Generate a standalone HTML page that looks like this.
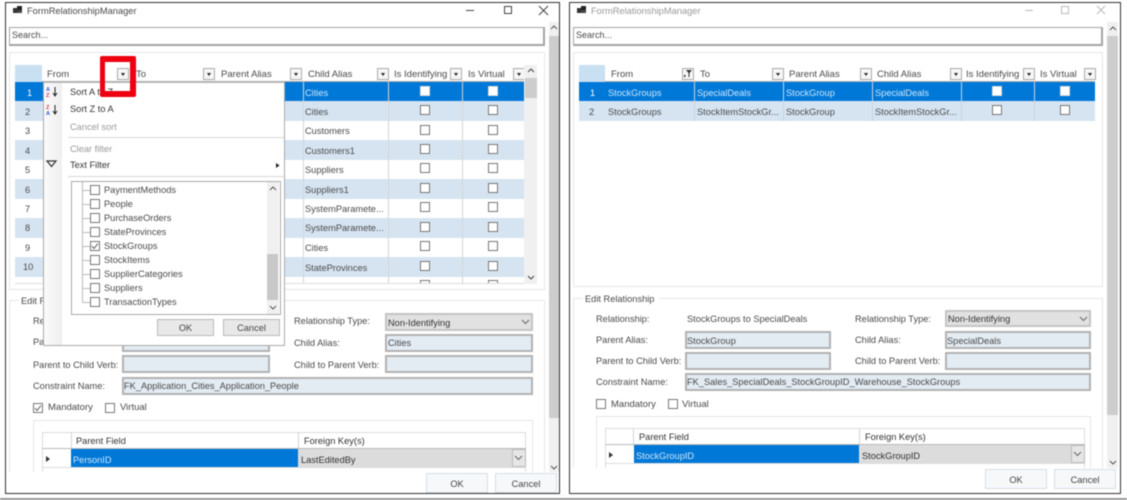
<!DOCTYPE html>
<html><head><meta charset="utf-8"><title>FormRelationshipManager</title>
<style>
html,body{margin:0;padding:0;background:#fff}
#p{position:relative;width:1127px;height:500px;overflow:hidden;background:#fff;font-family:"Liberation Sans",sans-serif;font-size:9.25px;color:#4a4a4a;filter:blur(.5px)}
#p div,#p span{position:absolute;box-sizing:border-box}
.t{white-space:nowrap;line-height:12px;height:12px;margin-top:1px}
.r{margin-top:0}
.h{margin-top:1px;font-size:9.5px}
.w{color:#cfe6fb}
.g{color:#999}
.box{background:#e3ebf3;border:2px solid #b2b2b2}
.combo{background:#e1e1e1;border:2px solid #c4c4c4}
.cb{width:10px;height:10px;border:1px solid #777;background:#fff}
.dd{width:12px;height:12px;border:1px solid #aaa;background:#f6f6f6}
.dd:after{content:"";position:absolute;left:3px;top:4px;border:2.5px solid transparent;border-top:3px solid #222}
.btn{background:#e8e8e8;border:1px solid #bbb;text-align:center;line-height:17px;color:#444}
.fb{background:#f6f8fa;border:1px solid #d5dde5;text-align:center;line-height:20px;color:#444}
.l{background:#d4d4d4}
.panel{border:1px solid #e6e6e6;background:#fff}
</style></head><body><div id="p">

<!-- LEFT WINDOW -->
<div style="left:5px;top:2px;width:555px;height:492px;border:1px solid #333;background:#fff"></div>
<svg style="position:absolute;left:12px;top:5px" width="12" height="10"><rect x="1" y="3" width="4" height="5" fill="#333"/><rect x="5" y="1" width="5" height="4" fill="#222"/><rect x="5" y="5" width="5" height="3" fill="#444"/></svg>
<span class="t" style="left:27px;top:4px;font-size:9.3px">FormRelationshipManager</span>
<svg style="position:absolute;left:460px;top:3px" width="95" height="14" fill="none" stroke="#444"><path d="M6 7.500H14M44.500 3.500H51.500V10.500H44.500ZM79 3L88 12M88 3L79 12"/></svg>
<div style="left:9px;top:27px;width:536px;height:19px;border:1px solid #a4a4a4;border-width:1px 2px 2px 1px"></div>
<span class="t" style="left:12px;top:28px;font-size:9px">Search...</span>
<div style="left:549px;top:22px;width:10px;height:450px;background:#f0f0f0"></div>
<div style="left:549px;top:36px;width:10px;height:382px;background:#cdcdcd"></div>
<svg style="position:absolute;left:549px;top:24px" width="10" height="8" fill="none" stroke="#555"><path d="M2 5L5 2L8 5"/></svg>
<svg style="position:absolute;left:549px;top:463px" width="10" height="8" fill="none" stroke="#555"><path d="M2 3L5 6L8 3"/></svg>

<div class="panel" style="left:9px;top:52px;width:536px;height:238px"></div>
<div style="left:15px;top:65px;width:522px;height:219px;background:#fff"></div>
<div style="left:15px;top:65px;width:27px;height:17px;background:#c9dff2"></div>
<span class="t h" style="left:47px;top:68px">From</span>
<div class="dd" style="left:117px;top:68px"></div>
<span class="t h" style="left:136px;top:68px">To</span>
<div class="dd" style="left:203px;top:68px"></div>
<span class="t h" style="left:221px;top:68px">Parent Alias</span>
<div class="dd" style="left:290px;top:68px"></div>
<span class="t h" style="left:308px;top:68px">Child Alias</span>
<div class="dd" style="left:377px;top:68px"></div>
<span class="t h" style="left:394px;top:68px">Is Identifying</span>
<div class="dd" style="left:450px;top:68px"></div>
<span class="t h" style="left:468px;top:68px">Is Virtual</span>
<div class="dd" style="left:513px;top:68px"></div>
<div style="left:42px;top:81px;width:482px;height:1px;background:#aaa"></div>

<div style="left:15px;top:82px;width:509px;height:19px;background:#0078d7"></div>
<div style="left:15px;top:101px;width:509px;height:20px;background:#d6e4f2"></div>
<div style="left:15px;top:140px;width:509px;height:20px;background:#d6e4f2"></div>
<div style="left:15px;top:179px;width:509px;height:20px;background:#d6e4f2"></div>
<div style="left:15px;top:218px;width:509px;height:20px;background:#d6e4f2"></div>
<div style="left:15px;top:257px;width:509px;height:20px;background:#d6e4f2"></div>
<div class="l" style="left:303px;top:82px;width:1px;height:201px"></div>
<div class="l" style="left:388px;top:82px;width:1px;height:201px"></div>
<div class="l" style="left:462px;top:82px;width:1px;height:201px"></div>
<div style="left:15px;top:283px;width:522px;height:1px;background:#ddd"></div>
<div style="left:524px;top:65px;width:13px;height:219px;background:#f0f0f0"></div>
<div style="left:525px;top:78px;width:12px;height:20px;background:#cdcdcd"></div>
<svg style="position:absolute;left:526px;top:67px" width="10" height="8" fill="none" stroke="#444"><path d="M2 5L5 2L8 5"/></svg>
<svg style="position:absolute;left:526px;top:273px" width="10" height="8" fill="none" stroke="#444"><path d="M2 3L5 6L8 3"/></svg>

<span class="t r" style="left:27px;top:87px;color:#fff">1</span>
<span class="t r" style="left:25px;top:106px">2</span>
<span class="t r" style="left:25px;top:125px">3</span>
<span class="t r" style="left:25px;top:145px">4</span>
<span class="t r" style="left:25px;top:164px">5</span>
<span class="t r" style="left:25px;top:184px">6</span>
<span class="t r" style="left:25px;top:203px">7</span>
<span class="t r" style="left:25px;top:222px">8</span>
<span class="t r" style="left:25px;top:242px">9</span>
<span class="t r" style="left:23px;top:261px">10</span>

<span class="t r w" style="left:305px;top:87px">Cities</span>
<span class="t r" style="left:305px;top:106px">Cities</span>
<span class="t r" style="left:305px;top:125px">Customers</span>
<span class="t r" style="left:305px;top:145px">Customers1</span>
<span class="t r" style="left:305px;top:164px">Suppliers</span>
<span class="t r" style="left:305px;top:184px">Suppliers1</span>
<span class="t r" style="left:305px;top:203px">SystemParamete...</span>
<span class="t r" style="left:305px;top:222px">SystemParamete...</span>
<span class="t r" style="left:305px;top:242px">Cities</span>
<span class="t r" style="left:305px;top:262px">StateProvinces</span>

<div class="cb" style="left:420px;top:86px;border-color:#ddd"></div><div class="cb" style="left:488px;top:86px;border-color:#ddd"></div>
<div class="cb" style="left:420px;top:105px"></div><div class="cb" style="left:488px;top:105px"></div>
<div class="cb" style="left:420px;top:125px"></div><div class="cb" style="left:488px;top:125px"></div>
<div class="cb" style="left:420px;top:144px"></div><div class="cb" style="left:488px;top:144px"></div>
<div class="cb" style="left:420px;top:163px"></div><div class="cb" style="left:488px;top:163px"></div>
<div class="cb" style="left:420px;top:183px"></div><div class="cb" style="left:488px;top:183px"></div>
<div class="cb" style="left:420px;top:202px"></div><div class="cb" style="left:488px;top:202px"></div>
<div class="cb" style="left:420px;top:222px"></div><div class="cb" style="left:488px;top:222px"></div>
<div class="cb" style="left:420px;top:241px"></div><div class="cb" style="left:488px;top:241px"></div>
<div class="cb" style="left:420px;top:261px"></div><div class="cb" style="left:488px;top:261px"></div>
<div style="left:420px;top:280px;width:10px;height:3px;border:1px solid #777;border-bottom:0"></div>
<div style="left:488px;top:280px;width:10px;height:3px;border:1px solid #777;border-bottom:0"></div>

<!-- left edit group -->
<div class="panel" style="left:9px;top:300px;width:536px;height:172px;border-bottom:0"></div>
<div style="left:19px;top:296px;width:40px;height:10px;background:#fff"></div>
<span class="t" style="left:21px;top:294px">Edit Relationship</span>
<span class="t" style="left:33px;top:314px">Relationship:</span>
<span class="t" style="left:33px;top:335px">Parent Alias:</span>
<span class="t" style="left:33px;top:358px">Parent to Child Verb:</span>
<span class="t" style="left:33px;top:379px">Constraint Name:</span>
<span class="t" style="left:294px;top:314px">Relationship Type:</span>
<span class="t" style="left:294px;top:336px">Child Alias:</span>
<span class="t" style="left:294px;top:358px">Child to Parent Verb:</span>
<div class="box" style="left:122px;top:334px;width:148px;height:18px"></div>
<div class="box" style="left:122px;top:355px;width:148px;height:18px"></div>
<div class="box" style="left:122px;top:377px;width:411px;height:18px"></div>
<span class="t r" style="left:124px;top:380px">FK_Application_Cities_Application_People</span>
<div class="combo" style="left:385px;top:313px;width:148px;height:18px"></div>
<span class="t" style="left:388px;top:316px;color:#333">Non-Identifying</span>
<svg style="position:absolute;left:521px;top:318px" width="10" height="8" fill="none" stroke="#666"><path d="M1 2L4.500 5.500L8 2"/></svg>
<div class="box" style="left:385px;top:334px;width:148px;height:18px"></div>
<span class="t r" style="left:388px;top:337px">Cities</span>
<div class="box" style="left:385px;top:355px;width:148px;height:18px"></div>
<div class="cb" style="left:33px;top:403px"></div>
<svg style="position:absolute;left:33px;top:403px" width="10" height="10" fill="none" stroke="#555"><path d="M2 5L4 7.500L8 2.500"/></svg>
<span class="t r" style="left:48px;top:402px;font-size:9.5px">Mandatory</span>
<div class="cb" style="left:105px;top:403px"></div>
<span class="t r" style="left:120px;top:402px;font-size:9.5px">Virtual</span>

<div class="panel" style="left:33px;top:420px;width:500px;height:52px;border-bottom:0"></div>
<div style="left:42px;top:432px;width:484px;height:40px;border-left:1px solid #ddd;border-top:1px solid #ddd;border-right:1px solid #ddd"></div>
<div class="l" style="left:71px;top:432px;width:1px;height:17px"></div>
<div class="l" style="left:298px;top:432px;width:1px;height:17px"></div>
<div style="left:42px;top:448px;width:484px;height:1px;background:#bbb"></div>
<span class="t" style="left:76px;top:434px;color:#333">Parent Field</span>
<span class="t" style="left:304px;top:434px;color:#333">Foreign Key(s)</span>
<svg style="position:absolute;left:45px;top:455px" width="6" height="8"><path d="M1 1L5 4L1 7Z" fill="#333"/></svg>
<div style="left:71px;top:449px;width:227px;height:18px;background:#0078d7"></div>
<span class="t w" style="left:73px;top:453px">PersonID</span>
<div style="left:298px;top:449px;width:228px;height:18px;background:#dcdcdc"></div>
<span class="t" style="left:301px;top:453px;color:#333">LastEditedBy</span>
<div style="left:512px;top:449px;width:14px;height:18px;background:#e6e6e6;border:1px solid #bbb"></div>
<svg style="position:absolute;left:514px;top:454px" width="10" height="8" fill="none" stroke="#666"><path d="M1 2L4.500 5.500L8 2"/></svg>
<div style="left:42px;top:467px;width:484px;height:1px;background:#ddd"></div>
<div style="left:6px;top:472px;width:542px;height:21px;background:#fff"></div>
<div class="fb" style="left:426px;top:473px;width:62px;height:20px">OK</div>
<div class="fb" style="left:495px;top:473px;width:62px;height:20px">Cancel</div>

<!-- left filter menu -->
<div style="left:43px;top:82px;width:242px;height:264px;background:#fff;border:1px solid #aaa;border-top:1px solid #bbb"></div>
<div style="left:44px;top:83px;width:18px;height:262px;background:linear-gradient(90deg,#fbfbfb,#efefef)"></div>
<svg style="position:absolute;left:46px;top:86px" width="14" height="12"><text x="0" y="5" font-size="5.500" font-family="Liberation Sans" fill="#3355dd" font-weight="bold">A</text><text x="0" y="11" font-size="5.500" font-family="Liberation Sans" fill="#dd3344" font-weight="bold">Z</text><path d="M9 1V9M7 7L9 10L11 7" stroke="#222" fill="none"/></svg>
<svg style="position:absolute;left:46px;top:104px" width="14" height="12"><text x="0" y="5" font-size="5.500" font-family="Liberation Sans" fill="#dd3344" font-weight="bold">Z</text><text x="0" y="11" font-size="5.500" font-family="Liberation Sans" fill="#3355dd" font-weight="bold">A</text><path d="M9 1V9M7 7L9 10L11 7" stroke="#222" fill="none"/></svg>
<svg style="position:absolute;left:46px;top:160px" width="12" height="8"><path d="M1 1H10L5.500 6.500Z" fill="none" stroke="#333" stroke-width="1.200"/></svg>
<span class="t" style="left:70px;top:85px;color:#333">Sort A to Z</span>
<span class="t r" style="left:70px;top:103px;color:#333">Sort Z to A</span>
<span class="t g" style="left:70px;top:120px">Cancel sort</span>
<div style="left:68px;top:137px;width:216px;height:1px;background:#d8d8d8"></div>
<span class="t g" style="left:70px;top:142px">Clear filter</span>
<span class="t" style="left:70px;top:158px;color:#333">Text Filter</span>
<svg style="position:absolute;left:275px;top:162px" width="6" height="7"><path d="M1 1L4.500 3.500L1 6Z" fill="#222"/></svg>
<div style="left:68px;top:176px;width:216px;height:1px;background:#d8d8d8"></div>
<div style="left:71px;top:181px;width:210px;height:134px;border:1px solid #aaa;background:#fff"></div>
<div style="left:82px;top:182px;width:1px;height:120px;background:#bbb"></div>
<div style="left:82px;top:190px;width:8px;height:1px;background:#bbb"></div>
<div style="left:82px;top:204px;width:8px;height:1px;background:#bbb"></div>
<div style="left:82px;top:218px;width:8px;height:1px;background:#bbb"></div>
<div style="left:82px;top:232px;width:8px;height:1px;background:#bbb"></div>
<div style="left:82px;top:246px;width:8px;height:1px;background:#bbb"></div>
<div style="left:82px;top:260px;width:8px;height:1px;background:#bbb"></div>
<div style="left:82px;top:274px;width:8px;height:1px;background:#bbb"></div>
<div style="left:82px;top:288px;width:8px;height:1px;background:#bbb"></div>
<div style="left:82px;top:302px;width:8px;height:1px;background:#bbb"></div>
<div class="cb" style="left:90px;top:185px"></div><span class="t r" style="left:104px;top:184px">PaymentMethods</span>
<div class="cb" style="left:90px;top:199px"></div><span class="t r" style="left:104px;top:198px">People</span>
<div class="cb" style="left:90px;top:213px"></div><span class="t r" style="left:104px;top:212px">PurchaseOrders</span>
<div class="cb" style="left:90px;top:227px"></div><span class="t r" style="left:104px;top:226px">StateProvinces</span>
<div class="cb" style="left:90px;top:241px"></div>
<svg style="position:absolute;left:90px;top:241px" width="10" height="10" fill="none" stroke="#555"><path d="M2 5L4 7.500L8 2.500"/></svg>
<span class="t r" style="left:104px;top:240px">StockGroups</span>
<div class="cb" style="left:90px;top:255px"></div><span class="t r" style="left:104px;top:254px">StockItems</span>
<div class="cb" style="left:90px;top:269px"></div><span class="t r" style="left:104px;top:268px">SupplierCategories</span>
<div class="cb" style="left:90px;top:283px"></div><span class="t r" style="left:104px;top:282px">Suppliers</span>
<div class="cb" style="left:90px;top:297px"></div><span class="t r" style="left:104px;top:296px">TransactionTypes</span>
<div style="left:267px;top:182px;width:12px;height:132px;background:#f0f0f0"></div>
<div style="left:267px;top:254px;width:11px;height:46px;background:#c8c8c8"></div>
<svg style="position:absolute;left:268px;top:185px" width="10" height="8" fill="none" stroke="#555"><path d="M2 5L5 2L8 5"/></svg>
<svg style="position:absolute;left:268px;top:303px" width="10" height="8" fill="none" stroke="#555"><path d="M2 3L5 6L8 3"/></svg>
<div class="btn" style="left:157px;top:319px;width:57px;height:17px">OK</div>
<div class="btn" style="left:223px;top:319px;width:57px;height:17px">Cancel</div>

<!-- red highlight -->
<div style="left:100px;top:56px;width:36px;height:41px;border:solid #ee0010;border-width:6px 6px 6px 5px;border-radius:2px"></div>

<!-- RIGHT WINDOW -->
<div style="left:569px;top:2px;width:552px;height:492px;border:1px solid #333;background:transparent"></div>
<svg style="position:absolute;left:576px;top:5px" width="12" height="10"><rect x="1" y="3" width="4" height="5" fill="#333"/><rect x="5" y="1" width="5" height="4" fill="#222"/><rect x="5" y="5" width="5" height="3" fill="#444"/></svg>
<span class="t" style="left:591px;top:4px;font-size:9.3px;color:#999">FormRelationshipManager</span>
<svg style="position:absolute;left:1020px;top:3px" width="95" height="14" fill="none" stroke="#bbb"><path d="M5 7.500H13M41.500 3.500H48.500V10.500H41.500ZM77 3L85 11M85 3L77 11"/></svg>
<div style="left:573px;top:27px;width:530px;height:19px;border:1px solid #a4a4a4;border-width:1px 2px 2px 1px"></div>
<span class="t" style="left:576px;top:28px;font-size:9px">Search...</span>
<div style="left:1107px;top:22px;width:11px;height:446px;background:#f0f0f0"></div>
<div style="left:1107px;top:36px;width:11px;height:379px;background:#cdcdcd"></div>
<svg style="position:absolute;left:1108px;top:25px" width="10" height="8" fill="none" stroke="#555"><path d="M2 5L5 2L8 5"/></svg>
<svg style="position:absolute;left:1108px;top:458px" width="10" height="8" fill="none" stroke="#555"><path d="M2 3L5 6L8 3"/></svg>

<div class="panel" style="left:573px;top:52px;width:530px;height:235px"></div>
<div style="left:579px;top:65px;width:26px;height:17px;background:#c9dff2"></div>
<span class="t h" style="left:611px;top:68px">From</span>
<div style="left:682px;top:68px;width:12px;height:12px;border:1px solid #aaa;background:#f6f6f6"></div>
<svg style="position:absolute;left:683px;top:69px" width="10" height="10"><path d="M3 1H9L6.500 4V8H5.500V4Z" fill="#333"/><rect x="1" y="6" width="1.500" height="2" fill="#333"/></svg>
<span class="t h" style="left:700px;top:68px">To</span>
<div class="dd" style="left:772px;top:68px"></div>
<span class="t h" style="left:789px;top:68px">Parent Alias</span>
<div class="dd" style="left:860px;top:68px"></div>
<span class="t h" style="left:877px;top:68px">Child Alias</span>
<div class="dd" style="left:950px;top:68px"></div>
<span class="t h" style="left:966px;top:68px">Is Identifying</span>
<div class="dd" style="left:1023px;top:68px"></div>
<span class="t h" style="left:1040px;top:68px">Is Virtual</span>
<div class="dd" style="left:1084px;top:68px"></div>
<div style="left:605px;top:81px;width:490px;height:1px;background:#aaa"></div>
<div style="left:579px;top:82px;width:516px;height:19px;background:#0078d7"></div>
<div style="left:579px;top:101px;width:516px;height:20px;background:#d6e4f2"></div>
<div style="left:694px;top:82px;width:1px;height:39px;background:#c4d4e4"></div>
<div style="left:783px;top:82px;width:1px;height:39px;background:#c4d4e4"></div>
<div style="left:872px;top:82px;width:1px;height:39px;background:#c4d4e4"></div>
<div style="left:961px;top:82px;width:1px;height:39px;background:#c4d4e4"></div>
<div style="left:1034px;top:82px;width:1px;height:39px;background:#c4d4e4"></div>
<span class="t r" style="left:590px;top:87px;color:#fff">1</span>
<span class="t r" style="left:589px;top:106px">2</span>
<span class="t r w" style="left:608px;top:87px">StockGroups</span>
<span class="t r w" style="left:697px;top:87px">SpecialDeals</span>
<span class="t r w" style="left:786px;top:87px">StockGroup</span>
<span class="t r w" style="left:875px;top:87px">SpecialDeals</span>
<span class="t r" style="left:608px;top:106px">StockGroups</span>
<span class="t r" style="left:697px;top:106px">StockItemStockGr...</span>
<span class="t r" style="left:786px;top:106px">StockGroup</span>
<span class="t r" style="left:875px;top:106px">StockItemStockGr...</span>
<div class="cb" style="left:992px;top:86px;border-color:#ddd"></div><div class="cb" style="left:1060px;top:86px;border-color:#ddd"></div>
<div class="cb" style="left:992px;top:105px"></div><div class="cb" style="left:1060px;top:105px"></div>

<div class="panel" style="left:573px;top:298px;width:530px;height:170px;border-bottom:0"></div>
<div style="left:583px;top:294px;width:76px;height:10px;background:#fff"></div>
<span class="t" style="left:585px;top:292px">Edit Relationship</span>
<span class="t" style="left:596px;top:312px">Relationship:</span>
<span class="t" style="left:687px;top:312px">StockGroups to SpecialDeals</span>
<span class="t" style="left:596px;top:333px">Parent Alias:</span>
<span class="t r" style="left:596px;top:355px">Parent to Child Verb:</span>
<span class="t r" style="left:596px;top:376px">Constraint Name:</span>
<span class="t" style="left:855px;top:312px">Relationship Type:</span>
<span class="t" style="left:855px;top:333px">Child Alias:</span>
<span class="t r" style="left:855px;top:355px">Child to Parent Verb:</span>
<div class="box" style="left:685px;top:331px;width:146px;height:18px"></div>
<span class="t" style="left:687px;top:334px">StockGroup</span>
<div class="box" style="left:685px;top:352px;width:146px;height:18px"></div>
<div class="box" style="left:685px;top:373px;width:406px;height:18px"></div>
<span class="t r" style="left:687px;top:376px">FK_Sales_SpecialDeals_StockGroupID_Warehouse_StockGroups</span>
<div class="combo" style="left:945px;top:310px;width:146px;height:17px"></div>
<span class="t r" style="left:948px;top:313px;color:#333">Non-Identifying</span>
<svg style="position:absolute;left:1079px;top:315px" width="10" height="8" fill="none" stroke="#666"><path d="M1 2L4.500 5.500L8 2"/></svg>
<div class="box" style="left:945px;top:331px;width:146px;height:18px"></div>
<span class="t" style="left:947px;top:334px">SpecialDeals</span>
<div class="box" style="left:945px;top:352px;width:146px;height:18px"></div>
<div class="cb" style="left:596px;top:399px"></div>
<span class="t" style="left:611px;top:398px;font-size:9.5px">Mandatory</span>
<div class="cb" style="left:668px;top:399px"></div>
<span class="t" style="left:682px;top:398px;font-size:9.5px">Virtual</span>

<div class="panel" style="left:596px;top:416px;width:495px;height:52px;border-bottom:0"></div>
<div style="left:605px;top:428px;width:480px;height:40px;border:1px solid #ddd;border-bottom:0"></div>
<div class="l" style="left:633px;top:428px;width:1px;height:17px"></div>
<div class="l" style="left:859px;top:428px;width:1px;height:17px"></div>
<div style="left:605px;top:444px;width:480px;height:1px;background:#bbb"></div>
<span class="t" style="left:639px;top:430px;color:#333">Parent Field</span>
<span class="t" style="left:865px;top:430px;color:#333">Foreign Key(s)</span>
<svg style="position:absolute;left:608px;top:451px" width="6" height="8"><path d="M1 1L5 4L1 7Z" fill="#333"/></svg>
<div style="left:634px;top:445px;width:225px;height:18px;background:#0078d7"></div>
<span class="t w" style="left:636px;top:449px">StockGroupID</span>
<div style="left:859px;top:445px;width:226px;height:18px;background:#dcdcdc"></div>
<span class="t" style="left:862px;top:449px;color:#333">StockGroupID</span>
<div style="left:1071px;top:445px;width:14px;height:18px;background:#e6e6e6;border:1px solid #bbb"></div>
<svg style="position:absolute;left:1073px;top:450px" width="10" height="8" fill="none" stroke="#666"><path d="M1 2L4.500 5.500L8 2"/></svg>
<div style="left:605px;top:463px;width:480px;height:1px;background:#ddd"></div>
<div style="left:570px;top:468px;width:537px;height:25px;background:#fff"></div>
<div class="fb" style="left:985px;top:469px;width:62px;height:20px">OK</div>
<div class="fb" style="left:1054px;top:469px;width:62px;height:20px">Cancel</div>

<div style="left:0;top:498px;width:1127px;height:2px;background:#999"></div>
</div></body></html>
